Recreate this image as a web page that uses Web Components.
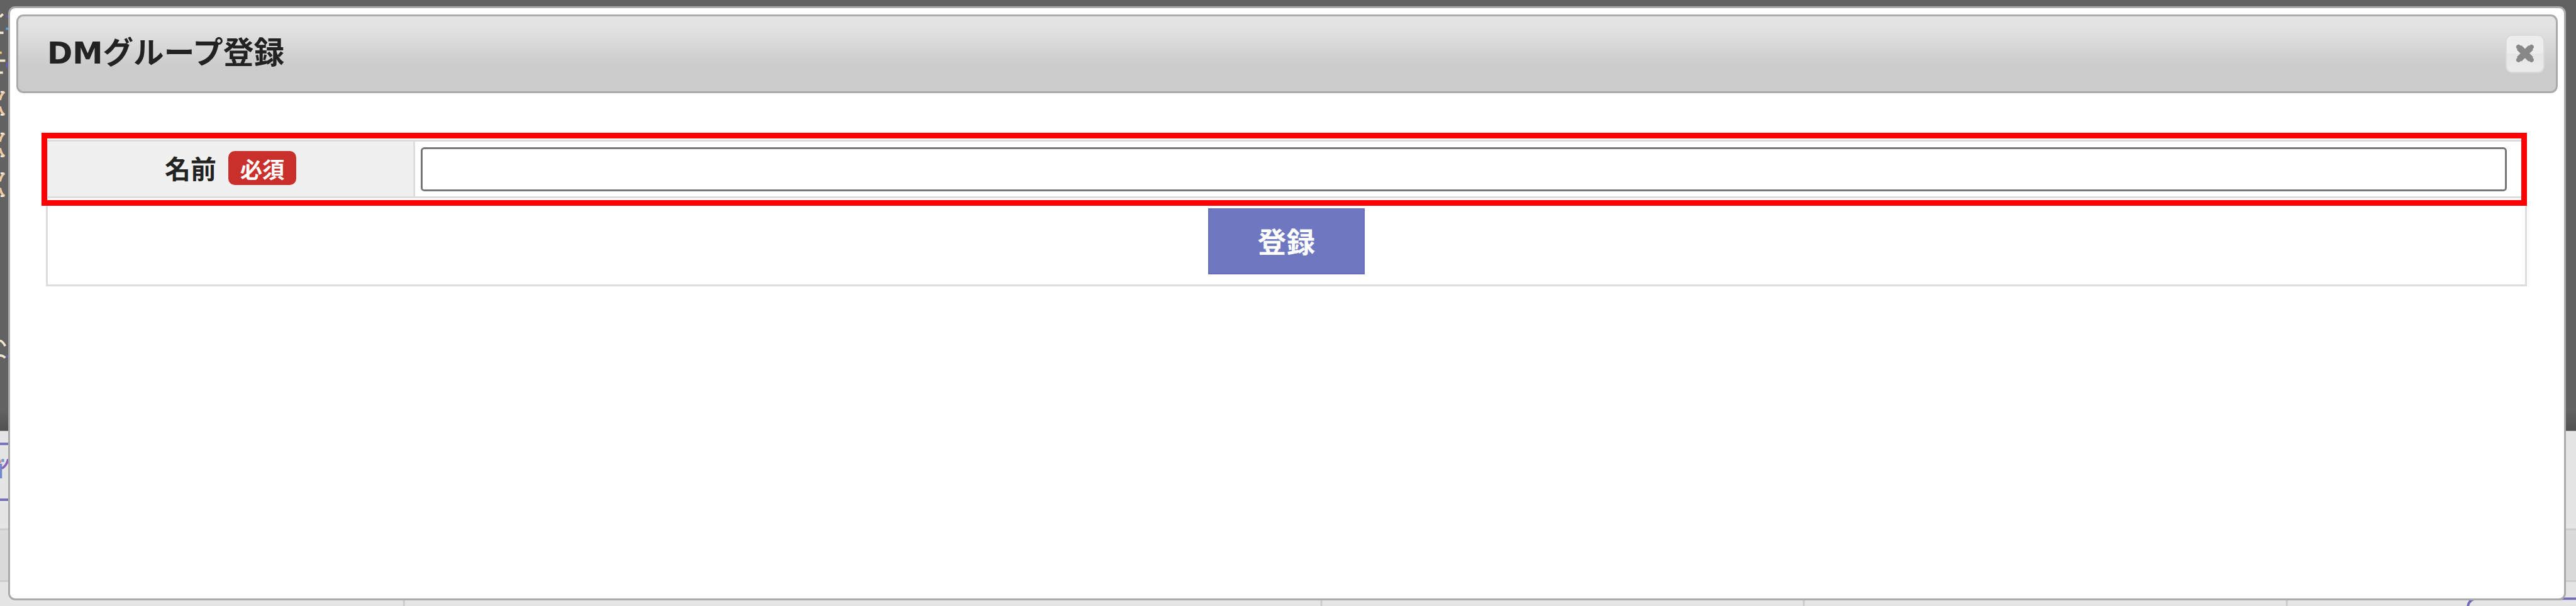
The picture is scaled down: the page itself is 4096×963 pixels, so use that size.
<!DOCTYPE html>
<html lang="ja"><head><meta charset="utf-8"><title>DMグループ登録</title>
<style>html,body{margin:0;height:963px;overflow:hidden}
body{--u:calc(4096px/4400);font-family:"DejaVu Sans","Noto Sans CJK JP",sans-serif;color:#222;background:#e5e5e5}</style></head><body>
<page-backdrop>
<modal-dialog>
<dialog-header slot="header">DMグループ登録</dialog-header>
<entry-form></entry-form>
</modal-dialog>
</page-backdrop>
<script>
function define(name, html){
  const t=document.createElement('template');t.innerHTML=html;
  customElements.define(name,class extends HTMLElement{constructor(){super();this.attachShadow({mode:'open'}).append(t.content.cloneNode(true));}});
}
define('page-backdrop',`<style>
:host{display:block;position:relative;box-sizing:border-box;width:4096px;height:963px;padding:calc(11*var(--u)) calc(17*var(--u)) calc(10*var(--u)) calc(14*var(--u));overflow:hidden}
svg.bg{position:absolute;left:0;top:0;width:100%;height:100%}
slot{display:block;position:relative;height:100%}
</style>
<svg class="bg" viewBox="0 0 4400 1035" preserveAspectRatio="none">
<defs><linearGradient id="s" x1="0" y1="0" x2="0" y2="1"><stop offset="0" stop-color="#626262"/><stop offset="1" stop-color="#505050"/></linearGradient></defs>
<rect width="4400" height="736" fill="#626262"/><rect y="700" width="4400" height="36" fill="url(#s)"/>
<rect y="736" width="4400" height="299" fill="#e5e5e5"/>
<rect y="904" width="4400" height="89" fill="#dadada"/>
<path d="M0 904H4400M0 992.500H4400M690 1020V1035M2257 1020V1035M3081 1020V1035M3906 1020V1035" stroke="#cbcbcb" stroke-width="3"/>
<path d="M0 758H20M0 853.500H20" stroke="#726bb8" stroke-width="4"/>
<path d="M4400 1022.500H4232Q4215 1022.500 4215 1040" fill="none" stroke="#726bb8" stroke-width="4"/>
<g fill="none" stroke="#f3e6cf" stroke-width="4">
<path d="M0 29L5 24M0 56H6M0 103.500H9M0 124H5M0 582Q4 582 9 591M0 607Q5 607 9 611"/>
<path d="M0 90H3" stroke="#e8c860"/>
<path d="M8 157Q2 160 0 171M0 182Q2 193 8 196M8 228Q2 231 0 242M0 253Q2 264 8 267M8 296Q2 299 0 310M0 321Q2 332 8 335" stroke="#f0c8a0"/>
<path d="M1 157H6M1 196H6M1 228H6M1 267H6M1 296H6M1 335H6" stroke="#f3efe6" stroke-width="3"/>
</g>
<path d="M12 27V30M12 106V115M12 607V611" stroke="#6460b4" stroke-width="3"/><path d="M12 47V51" stroke="#5ba2d8" stroke-width="4"/>
<path d="M1.500 792V817" stroke="#718acb" stroke-width="4"/><path d="M3 800Q11 796 14 784" fill="none" stroke="#8964b8" stroke-width="4"/><path d="M5 784V789" stroke="#579fd5" stroke-width="4"/><path d="M0 791L3 785" stroke="#d392a3" stroke-width="3"/>
</svg><slot></slot>`);
define('modal-dialog',`<style>
:host{display:flex;flex-direction:column;box-sizing:border-box;height:100%;background:#fff;border:3px solid #aaa;border-radius:calc(12*var(--u));padding:calc(10*var(--u)) calc(11*var(--u))}
.body{padding:calc(79*var(--u)) calc(52.500*var(--u)) 0 calc(50*var(--u))}
</style><slot name="header"></slot><div class="body"><slot></slot></div>`);
define('dialog-header',`<style>
:host{display:flex;align-items:center;justify-content:space-between;box-sizing:border-box;height:calc(135*var(--u));border:3px solid #aaa;border-radius:calc(12*var(--u));padding:0 calc(19*var(--u)) 0 calc(49*var(--u));background:linear-gradient(#e3e3e3 0 12%,#cbcbcb 68%)}
.t{font-size:calc(52.200*var(--u));font-weight:700;line-height:1;padding-bottom:calc(3*var(--u))}
</style><span class="t"><slot></slot></span><close-button></close-button>`);
define('close-button',`<style>
:host{display:flex;align-items:center;justify-content:center;box-sizing:border-box;width:calc(67*var(--u));height:calc(65*var(--u));border:2px solid #dadada;border-radius:calc(11*var(--u));background:linear-gradient(#ededed 50%,#e6e6e6 50%,#ebebeb)}
svg{width:calc(32*var(--u));height:calc(32*var(--u))}
</style><svg viewBox="0 0 32 32"><path d="M6 6L26 26M26 6L6 26" stroke="#888" stroke-width="11"/><path d="M5 5L27 27M27 5L5 27" stroke="#888" stroke-width="8" stroke-linecap="round"/></svg>`);
define('entry-form',`<style>
:host{display:block;position:relative}
.table{border:3px solid #ddd;box-sizing:border-box;height:calc(250.500*var(--u));display:grid;grid-template-rows:calc(97.500*var(--u)) 1fr}
.row{display:grid;grid-template-columns:calc(628*var(--u)) 1fr;border-bottom:3px solid #ddd}
.th{background:#f0f0f0;border-right:3px solid #ddd;display:flex;align-items:center;justify-content:center;gap:calc(20.500*var(--u));padding-bottom:calc(3*var(--u));font:700 calc(44*var(--u))/1 "Noto Sans CJK JP",sans-serif}
.td{display:flex;align-items:center;padding:0 calc(31.500*var(--u)) 0 calc(9.500*var(--u))}
.th span{padding-bottom:calc(2*var(--u))}
input{width:100%;height:calc(75*var(--u));box-sizing:border-box;border:3px solid #767676;border-radius:calc(6*var(--u));background:#fff;margin:0;padding:0 8px;font-size:calc(40*var(--u))}
.actions{display:flex;justify-content:center;align-items:flex-start;padding-top:calc(17*var(--u))}
button{width:calc(268*var(--u));height:calc(112.500*var(--u));border:2px solid #666eBC;border-radius:0;background:#6f77c0;color:#fff;font:700 calc(49*var(--u))/1 "Noto Sans CJK JP",sans-serif;padding:0 0 calc(2*var(--u))}
.mark{position:absolute;box-sizing:border-box;border:9px solid red;left:calc(-7*var(--u));right:0;top:calc(-12*var(--u));height:calc(125*var(--u));pointer-events:none}
</style><div class="table"><div class="row"><div class="th"><span>名前</span><required-badge>必須</required-badge></div><div class="td"><input type="text" aria-label="名前"></div></div>
<div class="actions"><button type="button">登録</button></div></div><div class="mark"></div>`);
define('required-badge',`<style>
:host{display:flex;align-items:center;justify-content:center;width:calc(116*var(--u));height:calc(58.500*var(--u));border-radius:calc(11*var(--u));background:#c92f2b;color:#fff;font:700 calc(38*var(--u))/1 "Noto Sans CJK JP",sans-serif}
</style><slot></slot>`);
</script></body></html>
